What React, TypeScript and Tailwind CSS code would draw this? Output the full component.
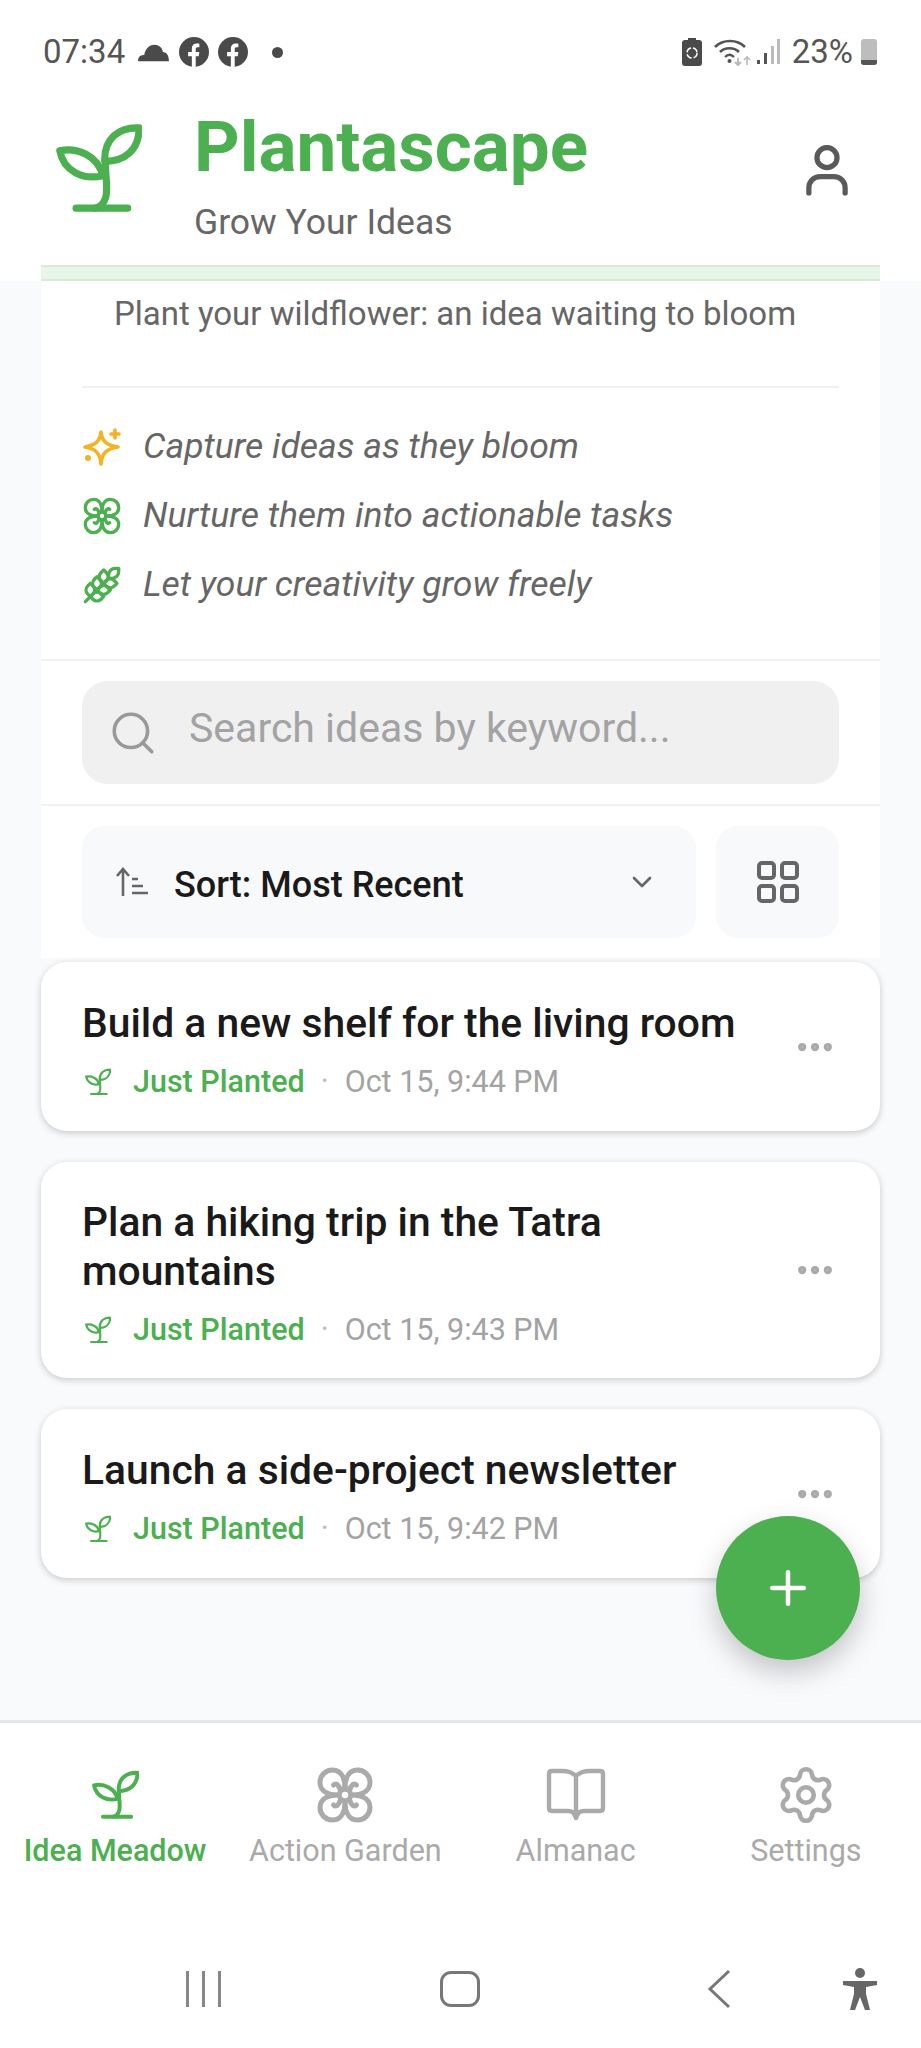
import { ChevronDown, Ellipsis, Plus, Search, Settings, Wheat } from "lucide-react";

const font = { fontFamily: "Roboto, sans-serif" };

function Sprout({ className }: { className?: string }) {
  return (
    <svg viewBox="0 0 90 95" fill="none" stroke="currentColor" strokeWidth="7.5" strokeLinecap="round" strokeLinejoin="round" className={className}>
      <path d="M87 5C66 4 50 16 51 40C72 40 87 28 87 5Z" />
      <path d="M4 29C22 25 44 34 49 55C28 60 8 50 4 29Z" />
      <path d="M52 40C51 55 55 66 52 78C50 84 46 88 41 89" />
      <path d="M21 89H75" />
    </svg>
  );
}

function Flower({ className }: { className?: string }) {
  return (
    <svg viewBox="0 0 24 24" fill="none" stroke="currentColor" strokeWidth="2" strokeLinecap="round" strokeLinejoin="round" className={className}>
      <path d="M12 9.4C12 6.6 11.2 2 7 2C4.2 2 2 4.2 2 7C2 11.2 6.6 12 9.4 12C6.6 12 2 12.8 2 17C2 19.8 4.2 22 7 22C11.2 22 12 17.4 12 14.6" />
      <path d="M12 9.4C12 6.6 12.8 2 17 2C19.8 2 22 4.2 22 7C22 11.2 17.4 12 14.6 12C17.4 12 22 12.8 22 17C22 19.8 19.8 22 17 22C12.8 22 12 17.4 12 14.6" />
      <circle cx="12" cy="12" r="2.3" />
      <path d="M7.4 8C8.4 7 9.6 8 10.2 10.2M16.6 8C15.6 7 14.4 8 13.8 10.2M7.4 16C8.4 17 9.6 16 10.2 13.8M16.6 16C15.6 17 14.4 16 13.8 13.8" />
    </svg>
  );
}

function Book({ className }: { className?: string }) {
  return (
    <svg viewBox="0 0 60 54" fill="none" stroke="currentColor" strokeWidth="4.4" strokeLinecap="round" strokeLinejoin="round" className={className}>
      <path d="M30 8C26 4 22 3 16 3H6Q3 3 3 6V40Q3 43 6 43H22C26 43 28 44 30 50C32 44 34 43 38 43H54Q57 43 57 40V6Q57 3 54 3H44C38 3 34 4 30 8V50" />
    </svg>
  );
}

function Sparkle({ className }: { className?: string }) {
  return (
    <svg viewBox="0 0 40 40" fill="none" className={className}>
      <path d="M19 5C20 14 24 18 36 20C24 22 20 26 19 37C18 26 14 22 3 20C14 18 18 14 19 5Z" stroke="currentColor" strokeWidth="3.6" strokeLinejoin="round" />
      <path d="M33 3V11M29 7H37" stroke="currentColor" strokeWidth="3.6" strokeLinecap="round" />
      <circle cx="6" cy="31" r="3" fill="currentColor" />
    </svg>
  );
}

function Profile({ className }: { className?: string }) {
  return (
    <svg viewBox="0 0 44 54" fill="none" stroke="currentColor" strokeWidth="5.5" strokeLinecap="round" className={className}>
      <circle cx="22" cy="13" r="10.5" />
      <path d="M3 50V45C3 38 8 33 15 33H29C36 33 41 38 41 45V50" />
    </svg>
  );
}

function SortIcon() {
  return (
    <svg viewBox="0 0 34 30" fill="none" stroke="#666666" strokeWidth="2.6" className="h-[30px] w-[34px]">
      <path d="M9 29V3M3 9L9 2L15 9" />
      <path d="M18 12H24M18 19H29M18 26H34" />
    </svg>
  );
}

function GridIcon() {
  return (
    <svg viewBox="0 0 44 44" fill="none" stroke="#666666" strokeWidth="4" className="h-[44px] w-[44px]">
      <rect x="3" y="3" width="15" height="15" rx="3" />
      <rect x="26" y="3" width="15" height="15" rx="3" />
      <rect x="3" y="26" width="15" height="15" rx="3" />
      <rect x="26" y="26" width="15" height="15" rx="3" />
    </svg>
  );
}

function Facebook() {
  return (
    <svg viewBox="0 0 28 28" className="h-[30px] w-[30px]">
      <circle cx="14" cy="14" r="14" fill="#4a4a4a" />
      <path d="M12 28V18H8.5V14H12V10.5C12 7.5 14 6 16.5 6C17.8 6 19 6.2 19 6.2V9.5H17.3C15.9 9.5 15.6 10.3 15.6 11.2V14H19L18.4 18H15.6V28Z" fill="#fff" />
    </svg>
  );
}

function StatusBar() {
  return (
    <div className="flex h-[52px] items-center justify-between pl-[43px] pr-[44px] text-[33px] text-[#555555]">
      <div className="flex items-center">
        <span>07:34</span>
        <svg viewBox="0 0 32 20" className="ml-[12px] h-[22px] w-[33px]">
          <path d="M1 19C1 15 3 13 7 13C8 6 13 3 17 3C22 3 25 7 25 10C29 10 31 14 31 19Z" fill="#4a4a4a" />
        </svg>
        <div className="ml-[9px] flex gap-[9px]">
          <Facebook />
          <Facebook />
        </div>
        <span className="ml-[24px] h-[11px] w-[11px] rounded-full bg-[#4a4a4a]" />
      </div>
      <div className="flex items-center">
        <svg viewBox="0 0 20 28" className="h-[28px] w-[20px]">
          <path d="M6 0H14V2H17C19 2 20 3 20 5V25C20 27 19 28 17 28H3C1 28 0 27 0 25V5C0 3 1 2 3 2H6Z" fill="#4a4a4a" />
          <circle cx="10" cy="15" r="5" fill="none" stroke="#fff" strokeWidth="1.5" strokeDasharray="6 2" />
        </svg>
        <svg viewBox="0 0 38 28" fill="none" className="ml-[12px] h-[28px] w-[38px]" stroke="#555555">
          <path d="M1 9C9 1 23 1 31 9" strokeWidth="2.6" />
          <path d="M6 14C11 9 20 9 25 14" strokeWidth="2.6" />
          <path d="M11 19C14 16 17 16 20 19" strokeWidth="2.4" />
          <circle cx="15.5" cy="23" r="2" fill="#555555" stroke="none" />
          <path d="M24 20V27M21 24L24 27L27 24" stroke="#bbbbbb" strokeWidth="2" />
          <path d="M33 27V19M30 22L33 19L36 22" stroke="#bbbbbb" strokeWidth="1.6" />
        </svg>
        <svg viewBox="0 0 24 26" className="ml-[5px] h-[26px] w-[24px]">
          <rect x="0" y="21" width="3" height="4" fill="#555555" />
          <rect x="7" y="14" width="3" height="11" fill="#555555" />
          <rect x="14" y="7" width="3" height="18" fill="#bbbbbb" />
          <rect x="20" y="0" width="3" height="25" fill="#bbbbbb" />
        </svg>
        <span className="ml-[11px]">23%</span>
        <div className="relative ml-[8px] h-[26px] w-[16px] rounded-[3px] bg-[#bdbdbd]">
          <div className="absolute right-0 bottom-0 left-0 h-[5px] rounded-b-[3px] bg-[#555555]" />
        </div>
      </div>
    </div>
  );
}

function Header() {
  return (
    <header className="mx-[41px] flex h-[170px] items-start">
      <Sprout className="mt-[28px] ml-[15px] h-[91px] w-[86px] text-[#4caf50]" />
      <div className="ml-[52px] flex flex-col">
        <h1 className="mt-[12px] text-[71px] leading-[80px] font-bold text-[#4caf50]">Plantascape</h1>
        <p className="mt-[15px] text-[35.5px] leading-[40px] text-[#666666]">Grow Your Ideas</p>
      </div>
      <Profile className="mt-[50px] mr-[32px] ml-auto h-[52px] w-[42px] text-[#5a5a5a]" />
    </header>
  );
}

function Feature({ icon, text }: { icon: React.ReactNode; text: string }) {
  return (
    <div className="flex h-[69px] items-center gap-[21px]">
      {icon}
      <span className="text-[35.5px] text-[#666666] italic">{text}</span>
    </div>
  );
}

function IdeaCard({ title, time, height }: { title: string; time: string; height: string }) {
  return (
    <div className={`flex items-center rounded-[26px] bg-white pr-[43px] pl-[41px] shadow-[0_2px_7px_rgba(0,0,0,0.2)] ${height}`}>
      <div className="flex-1 pt-[6px]">
        <h3 className="text-[40.8px] leading-[49px] font-medium text-[#1a1a1a]">{title}</h3>
        <div className="mt-[16px] flex items-center text-[30.5px] leading-[36px]">
          <Sprout className="ml-[3px] h-[30px] w-[26px] text-[#4caf50]" />
          <span className="ml-[22px] font-medium text-[#4caf50]">Just Planted</span>
          <span className="mx-[16px] text-[#bdbdbd]">·</span>
          <span className="text-[#a3a3a3]">{time}</span>
        </div>
      </div>
      <Ellipsis className="h-[44px] w-[44px] text-[#aaaaaa]" strokeWidth={2.5} />
    </div>
  );
}

function NavItem({ icon, label, active }: { icon: React.ReactNode; label: string; active?: boolean }) {
  return (
    <div className={`flex flex-col items-center ${active ? "text-[#4caf50]" : "text-[#aaaaaa]"}`}>
      <div className="flex h-[64px] items-center">{icon}</div>
      <span className={`mt-[7px] text-[30.5px] leading-[34px] ${active ? "font-medium" : ""}`}>{label}</span>
    </div>
  );
}

export default function App() {
  return (
    <div className="relative flex h-[2048px] w-[921px] flex-col overflow-hidden bg-white" style={font}>
      <div className="pt-[26px]">
        <StatusBar />
      </div>
      <div className="h-[17px]" />
      <Header />
      <div className="mx-[41px] h-[16px] border-t-2 border-b-2 border-[#d7ecd8] bg-[#e8f5e9]" />

      <main className="flex-1 bg-[#f8fafc]">
        <div className="mx-[41px] bg-white">
          <p className="pt-[9px] pr-[11px] text-center text-[33px] leading-[48px] text-[#666666]">
            Plant your wildflower: an idea waiting to bloom
          </p>
          <div className="mx-[41px] mt-[48px] border-t-2 border-[#f0f0f0]" />
          <div className="mx-[41px] mt-[24px] mb-[40px]">
            <Feature icon={<Sparkle className="h-[40px] w-[40px] text-[#f5b324]" />} text="Capture ideas as they bloom" />
            <Feature icon={<Flower className="h-[40px] w-[40px] text-[#4caf50]" />} text="Nurture them into actionable tasks" />
            <Feature icon={<Wheat className="h-[40px] w-[40px] text-[#4caf50]" />} text="Let your creativity grow freely" />
          </div>
          <div className="border-t-2 border-[#f2f2f2] px-[41px] py-[20px]">
            <div className="flex h-[103px] items-center rounded-[26px] bg-[#f0f0f0] pl-[26px]">
              <Search className="h-[50px] w-[50px] text-[#999999]" strokeWidth={1.7} />
              <span className="ml-[31px] pb-[8px] text-[41px] text-[#a3a3a3]">Search ideas by keyword...</span>
            </div>
          </div>
          <div className="flex gap-[20px] border-t-2 border-[#f2f2f2] px-[41px] pt-[20px] pb-[20px]">
            <div className="flex h-[112px] flex-1 items-center rounded-[22px] bg-[#f8f9fa] pr-[38px] pl-[32px]">
              <SortIcon />
              <span className="ml-[26px] flex-1 pt-[6px] text-[36px] font-medium text-[#1a1a1a]">Sort: Most Recent</span>
              <ChevronDown className="h-[32px] w-[32px] text-[#666666]" />
            </div>
            <div className="flex h-[112px] w-[123px] items-center justify-center rounded-[22px] bg-[#f8f9fa]">
              <GridIcon />
            </div>
          </div>
        </div>

        <div className="mx-[41px] mt-[4px] flex flex-col gap-[31px]">
          <IdeaCard title="Build a new shelf for the living room" time="Oct 15, 9:44 PM" height="h-[169px]" />
          <IdeaCard title="Plan a hiking trip in the Tatra mountains" time="Oct 15, 9:43 PM" height="h-[216px]" />
          <IdeaCard title="Launch a side-project newsletter" time="Oct 15, 9:42 PM" height="h-[169px]" />
        </div>
      </main>

      <button className="absolute top-[1516px] left-[716px] flex h-[144px] w-[144px] items-center justify-center rounded-full bg-[#4caf50] shadow-[0_12px_28px_rgba(0,0,0,0.22)]">
        <Plus className="h-[54px] w-[54px] text-white" strokeWidth={2} />
      </button>

      <nav className="grid h-[328px] grid-cols-4 border-t-[3px] border-[#e6e6e6] bg-white">
        <div className="pt-[40px]">
          <NavItem active label="Idea Meadow" icon={<Sprout className="h-[50px] w-[47px]" />} />
        </div>
        <div className="pt-[40px]">
          <NavItem label="Action Garden" icon={<Flower className="h-[60px] w-[60px]" />} />
        </div>
        <div className="pt-[40px]">
          <NavItem label="Almanac" icon={<Book className="h-[54px] w-[60px]" />} />
        </div>
        <div className="pt-[40px]">
          <NavItem label="Settings" icon={<Settings className="h-[62px] w-[62px]" strokeWidth={1.8} />} />
        </div>
      </nav>

      <div className="absolute bottom-[37px] left-0 flex h-[44px] w-full items-center text-[#777777]">
        <div className="ml-[186px] flex gap-[13px]">
          <span className="h-[36px] w-[3px] bg-[#888888]" />
          <span className="h-[36px] w-[3px] bg-[#888888]" />
          <span className="h-[36px] w-[3px] bg-[#888888]" />
        </div>
        <span className="ml-[219px] h-[36px] w-[40px] rounded-[11px] border-[3px] border-[#777777]" />
        <svg viewBox="0 0 24 40" fill="none" stroke="#777777" strokeWidth="3" className="ml-[227px] h-[40px] w-[24px]">
          <path d="M22 2L3 20L22 38" />
        </svg>
        <svg viewBox="0 0 34 42" className="ml-[112px] h-[42px] w-[34px]" fill="#666666">
          <circle cx="17" cy="5" r="5" />
          <path d="M0 13H34V17L23 19V26L27 42H22L17 29L12 42H7L11 26V19L0 17Z" />
        </svg>
      </div>
    </div>
  );
}
